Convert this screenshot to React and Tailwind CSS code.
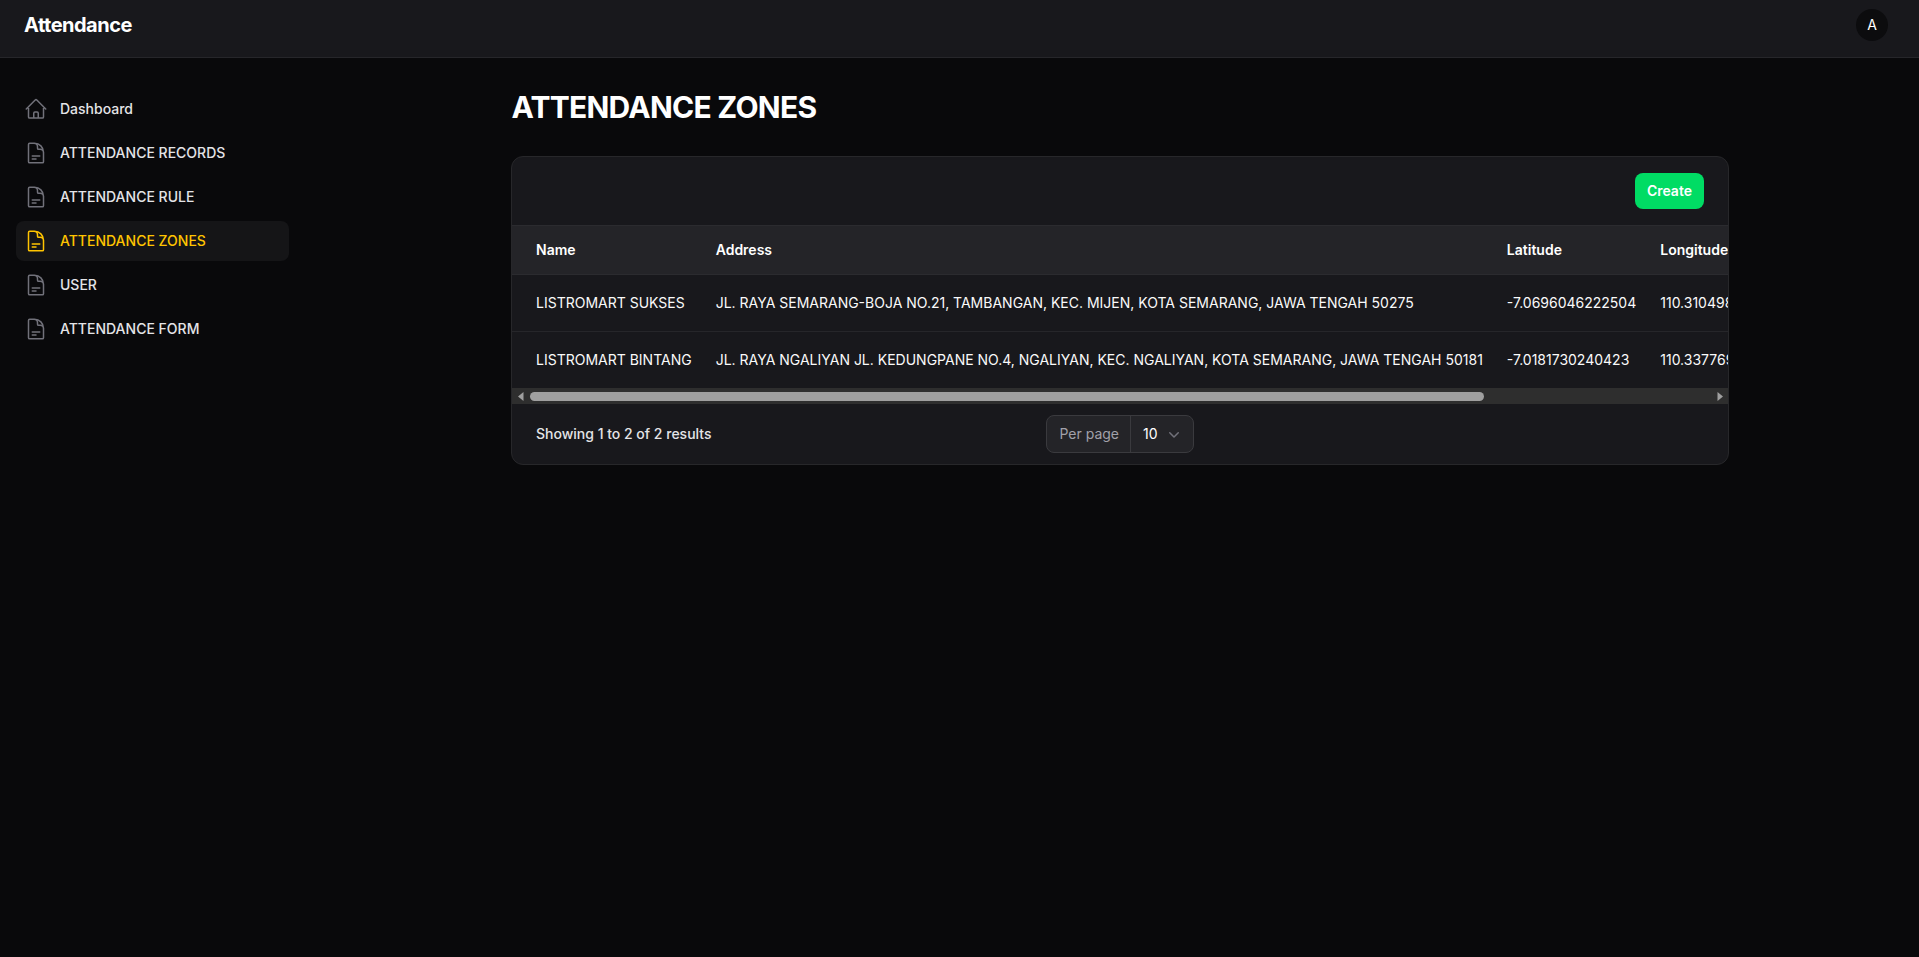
import { HiOutlineHome, HiOutlineDocumentText, HiMiniChevronDown } from "react-icons/hi2"

const navItems = [
    { label: "Dashboard", icon: HiOutlineHome },
    { label: "ATTENDANCE RECORDS", icon: HiOutlineDocumentText },
    { label: "ATTENDANCE RULE", icon: HiOutlineDocumentText },
    { label: "ATTENDANCE ZONES", icon: HiOutlineDocumentText, active: true },
    { label: "USER", icon: HiOutlineDocumentText },
    { label: "ATTENDANCE FORM", icon: HiOutlineDocumentText },
]

const zones = [
    {
        name: "LISTROMART SUKSES",
        address: "JL. RAYA SEMARANG-BOJA NO.21, TAMBANGAN, KEC. MIJEN, KOTA SEMARANG, JAWA TENGAH 50275",
        latitude: "-7.0696046222504",
        longitude: "110.31049843221",
    },
    {
        name: "LISTROMART BINTANG",
        address: "JL. RAYA NGALIYAN JL. KEDUNGPANE NO.4, NGALIYAN, KEC. NGALIYAN, KOTA SEMARANG, JAWA TENGAH 50181",
        latitude: "-7.0181730240423",
        longitude: "110.33776912034",
    },
]

const th = "px-3 first:pl-6 py-[14px] text-left text-sm font-semibold whitespace-nowrap text-white"
const td = "px-3 first:pl-6 py-[18px] text-sm whitespace-nowrap text-[#fafafa]"

export default function App() {
    return <div className="min-h-screen bg-[#09090b] font-['Inter',sans-serif] text-white">
        <header className="flex items-center justify-between border-b border-[#26262a] bg-[#18181c] pt-[9px] pb-4 pl-6 pr-[31px]">
            <div className="text-xl font-bold leading-5 tracking-tight">Attendance</div>
            <div className="flex h-8 w-8 items-center justify-center rounded-full bg-[#0c0c0e] text-sm text-white">A</div>
        </header>
        <div className="flex">
            <aside className="w-[321px] shrink-0 pt-[31px] pl-4 pr-[32px]">
                <nav className="flex flex-col gap-1">
                    {navItems.map((item) => {
                        const Icon = item.icon
                        return <a key={item.label} className={"flex h-10 items-center gap-3 rounded-lg px-2 text-sm font-medium " + (item.active ? "bg-[#151517] text-[#ffc400]" : "text-[#e4e4e7]")}>
                            <Icon className={"h-6 w-6 shrink-0 " + (item.active ? "text-[#ffc400]" : "text-[#71717a]")} />
                            <span>{item.label}</span>
                        </a>
                    })}
                </nav>
            </aside>
            <main className="min-w-0 flex-1">
                <div className="mx-auto max-w-[1282px] px-8 pt-[31px]">
                    <h1 className="ml-[0.5px] text-3xl font-bold tracking-tight text-white">ATTENDANCE ZONES</h1>
                    <div className="mt-[31px] overflow-hidden rounded-xl border border-[#27272a] bg-[#18181c]">
                        <div className="flex h-[68px] items-center justify-end px-6">
                            <button className="flex h-9 items-center rounded-lg bg-[#00dc64] px-3 text-sm font-semibold text-white">Create</button>
                        </div>
                        <div className="overflow-hidden border-t border-[#2b2b2f]">
                            <table className="w-max border-collapse">
                                <thead>
                                    <tr className="border-b border-[#2b2b2f] bg-[#242428]">
                                        <th className={th}>Name</th>
                                        <th className={th}>Address</th>
                                        <th className={th}>Latitude</th>
                                        <th className={th}>Longitude</th>
                                    </tr>
                                </thead>
                                <tbody>
                                    {zones.map((z) => <tr key={z.name} className="border-b border-[#26262a] last:border-b-0">
                                        <td className={td}>{z.name}</td>
                                        <td className={td}>{z.address}</td>
                                        <td className={td}>{z.latitude}</td>
                                        <td className={td}>{z.longitude}</td>
                                    </tr>)}
                                </tbody>
                            </table>
                        </div>
                        <div className="flex h-4 items-center bg-[#2e2e2e]">
                            <div className="flex w-[18px] justify-center">
                                <svg width="6" height="9" viewBox="0 0 6 9"><path d="M5.5 0v9L0 4.5z" fill="#9f9f9f" /></svg>
                            </div>
                            <div className="h-[9px] w-[954px] rounded-full bg-[#9f9f9f]"></div>
                            <div className="flex-1"></div>
                            <div className="flex w-[16px] justify-center">
                                <svg width="6" height="9" viewBox="0 0 6 9"><path d="M.5 0v9L6 4.5z" fill="#9f9f9f" /></svg>
                            </div>
                        </div>
                        <div className="grid h-[60px] grid-cols-[1fr_auto_1fr] items-center px-6">
                            <div className="text-sm font-medium text-[#e4e4e7]">Showing 1 to 2 of 2 results</div>
                            <div className="flex h-[38px] items-center rounded-lg border border-[#3a3a3e] bg-[#242428] text-sm">
                                <span className="flex h-full items-center border-r border-[#3a3a3e] pl-3 pr-[11px] text-[#a1a1aa]">Per page</span>
                                <span className="flex items-center gap-1.5 pl-3 pr-[9px] text-white">10 <HiMiniChevronDown className="h-5 w-5 text-[#71717a]" /></span>
                            </div>
                            <div></div>
                        </div>
                    </div>
                </div>
            </main>
        </div>
    </div>
}
